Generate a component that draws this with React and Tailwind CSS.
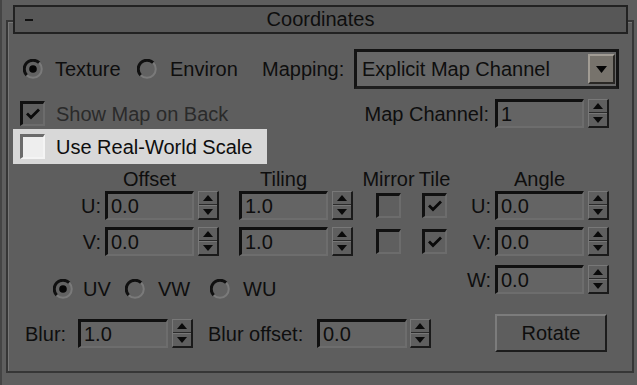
import React from 'react';

// 3ds Max style "Coordinates" rollout, dark UI scheme

const Radio = ({ checked }) => (
  <svg width="20" height="20" viewBox="0 0 20 20" className="shrink-0">
    <circle cx="10" cy="10" r="8.5" fill="#626262" />
    <path d="M16.2 3.8 A8.5 8.5 0 0 0 3.8 16.2" fill="none" stroke="#101010" strokeWidth="3" />
    <path d="M3.8 16.2 A8.5 8.5 0 0 0 16.2 3.8" fill="none" stroke="#7a7a7a" strokeWidth="2" />
    {checked && <circle cx="10" cy="10" r="3.8" fill="#050505" />}
  </svg>
);

const Check = ({ checked, light }) => (
  <div
    className={`flex h-[25px] w-[25px] shrink-0 items-center justify-center border-t-[3px] border-l-[3px] border-b-2 border-r-2 ${
      light
        ? 'border-t-[#6b6b6b] border-l-[#6b6b6b] border-b-[#f4f4f4] border-r-[#f4f4f4] bg-[#eeeeee]'
        : 'border-t-[#111111] border-l-[#111111] border-b-[#6c6c6c] border-r-[#6c6c6c] bg-[#5f5f5f]'
    }`}
  >
    {checked && (
      <svg width="16" height="14" viewBox="0 0 16 14">
        <path d="M2 6.5 L6 10.5 L14 2.5" fill="none" stroke="#0a0a0a" strokeWidth="2.8" />
      </svg>
    )}
  </div>
);

const Field = ({ value, w = 'w-[89px]' }) => (
  <div className={`flex h-[29px] ${w} shrink-0 items-center border-t-[3px] border-l-[3px] border-b-2 border-r-2 border-t-[#101010] border-l-[#101010] border-b-[#6d6d6d] border-r-[#6d6d6d] bg-[#646464] pl-[3px] text-[20px] leading-none text-[#0e0e0e]`}>
    {value}
  </div>
);

const Spinner = () => (
  <div className="flex h-[29px] w-[21px] shrink-0 flex-col border-t border-l border-b-2 border-r-2 border-t-[#787878] border-l-[#787878] border-b-[#1a1a1a] border-r-[#1a1a1a] bg-[#5f5f5f]">
    <div className="flex flex-1 items-center justify-center border-b border-[#2a2a2a]">
      <svg width="10" height="6" viewBox="0 0 10 6"><path d="M5 0 L10 6 L0 6 Z" fill="#0a0a0a" /></svg>
    </div>
    <div className="flex flex-1 items-center justify-center border-t border-[#777777]">
      <svg width="10" height="6" viewBox="0 0 10 6"><path d="M0 0 L10 0 L5 6 Z" fill="#0a0a0a" /></svg>
    </div>
  </div>
);

const SpinField = ({ label, value, labelW = 'w-[29px]' }) => (
  <div className="flex items-center">
    {label !== undefined && <span className={`${labelW} text-right`}>{label}</span>}
    <div className="ml-[4px]"><Field value={value} /></div>
    <div className="ml-[4px]"><Spinner /></div>
  </div>
);

const Head = ({ children, w }) => (
  <div className={`flex ${w} shrink-0 justify-center whitespace-nowrap`}>{children}</div>
);

export default function App() {
  return (
    <div className="h-[385px] w-[637px] overflow-hidden border-l-2 border-l-[#454545] bg-[#5e5e5e] pt-[20px] pl-[4px] pr-[3px] font-['Liberation_Sans',Arial,sans-serif] text-[20px] leading-none text-[#0e0e0e]">
      <div className="h-[353px] border-2 border-[#363636] shadow-[inset_1px_1px_0_#777777]">
        {/* rollout title bar */}
        <div className="-mt-[17px] ml-[5px] mr-[4px] grid h-[29px] grid-cols-[1fr_auto_1fr] items-center border-2 border-[#222222] bg-[#575757]">
          <div className="pl-[10px]">
            <div className="h-[2px] w-[8px] bg-[#111111]" />
          </div>
          <span className="pb-[1px]">Coordinates</span>
          <div />
        </div>

        {/* texture / environ / mapping */}
        <div className="mt-[15px] flex h-[40px] items-center pl-[15px]">
          <Radio checked />
          <span className="ml-[12px] w-[82px]">Texture</span>
          <Radio />
          <span className="ml-[13px] w-[92px]">Environ</span>
          <span className="w-[92px]">Mapping:</span>
          <div className="flex h-[40px] w-[265px] items-center justify-between border-[3px] border-[#141414] border-b-[#1e1e1e] bg-[#676767] pl-[5px] pr-[1px]">
            <span>Explicit Map Channel</span>
            <div className="flex h-[30px] w-[27px] items-center justify-center border-t-2 border-l-2 border-b-2 border-r-2 border-t-[#a19c94] border-l-[#a19c94] border-b-[#2a2825] border-r-[#2a2825] bg-[#77736c]">
              <svg width="11" height="7" viewBox="0 0 11 7"><path d="M0 0 L11 0 L5.5 7 Z" fill="#050505" /></svg>
            </div>
          </div>
        </div>

        {/* show map on back / map channel */}
        <div className="mt-[10px] flex h-[29px] items-center pl-[12px] pr-[23px]">
          <Check checked />
          <span className="ml-[11px] text-[#2a2a2a]">Show Map on Back</span>
          <div className="flex-1" />
          <span className="mr-[2px]">Map Channel:</span>
          <div className="ml-[4px]"><Field value="1" /></div>
          <div className="ml-[4px]"><Spinner /></div>
        </div>

        {/* real-world scale (hovered) */}
        <div className="ml-[5px] mt-[1px] flex h-[35px] w-[254px] items-center bg-[#d8d8d8] pl-[7px]">
          <Check light />
          <span className="ml-[11px]">Use Real-World Scale</span>
        </div>

        <div className="flex">
          {/* offset / tiling / mirror / tile */}
          <div className="flex flex-col">
            <div className="mt-[5px] flex h-[20px] items-center">
              <div className="w-[97px]" />
              <Head w="w-[89px]">Offset</Head>
              <div className="w-[45px]" />
              <Head w="w-[89px]">Tiling</Head>
              <div className="w-[48px]" />
              <Head w="w-[25px]">Mirror</Head>
              <div className="w-[21px]" />
              <Head w="w-[25px]">Tile</Head>
            </div>
            {[['U:', '0.0', '1.0', 'mt-[2px]'], ['V:', '0.0', '1.0', 'mt-[7px]']].map(([l, o, t, m]) => (
              <div key={l} className={`${m} flex h-[29px] items-center`}>
                <SpinField label={l} value={o} labelW="w-[93px]" />
                <div className="ml-[20px]"><Field value={t} /></div>
                <div className="ml-[4px]"><Spinner /></div>
                <div className="ml-[23px]"><Check /></div>
                <div className="ml-[21px]"><Check checked /></div>
              </div>
            ))}
            <div className="mt-[23px] flex h-[20px] items-center pl-[45px]">
              <Radio checked />
              <span className="ml-[10px] w-[42px]">UV</span>
              <Radio />
              <span className="ml-[13px] w-[52px]">VW</span>
              <Radio />
              <span className="ml-[13px]">WU</span>
            </div>
            <div className="mt-[19px] flex h-[31px] items-center pl-[17px]">
              <span className="w-[53px]">Blur:</span>
              <Field value="1.0" w="w-[90px]" />
              <div className="ml-[4px]"><Spinner /></div>
              <span className="ml-[15px] w-[109px]">Blur offset:</span>
              <Field value="0.0" w="w-[90px]" />
              <div className="ml-[3px]"><Spinner /></div>
            </div>
          </div>

          {/* angle */}
          <div className="ml-[15px] flex flex-col">
            <div className="mt-[5px] flex h-[20px] items-center">
              <div className="w-[33px]" />
              <Head w="w-[89px]">Angle</Head>
            </div>
            <div className="mt-[2px] flex h-[29px] items-center"><SpinField label="U:" value="0.0" /></div>
            <div className="mt-[7px] flex h-[29px] items-center"><SpinField label="V:" value="0.0" /></div>
            <div className="mt-[9px] flex h-[29px] items-center"><SpinField label="W:" value="0.0" /></div>
            <button className="ml-[33px] mt-[20px] flex h-[38px] w-[112px] items-center justify-center border-t-2 border-l-2 border-b-2 border-r-2 border-t-[#7c7c7c] border-l-[#7c7c7c] border-b-[#1c1c1c] border-r-[#1c1c1c] bg-[#5e5e5e] pb-[1px] text-[20px] leading-none text-[#0e0e0e]">
              Rotate
            </button>
          </div>
        </div>
      </div>
    </div>
  );
}
